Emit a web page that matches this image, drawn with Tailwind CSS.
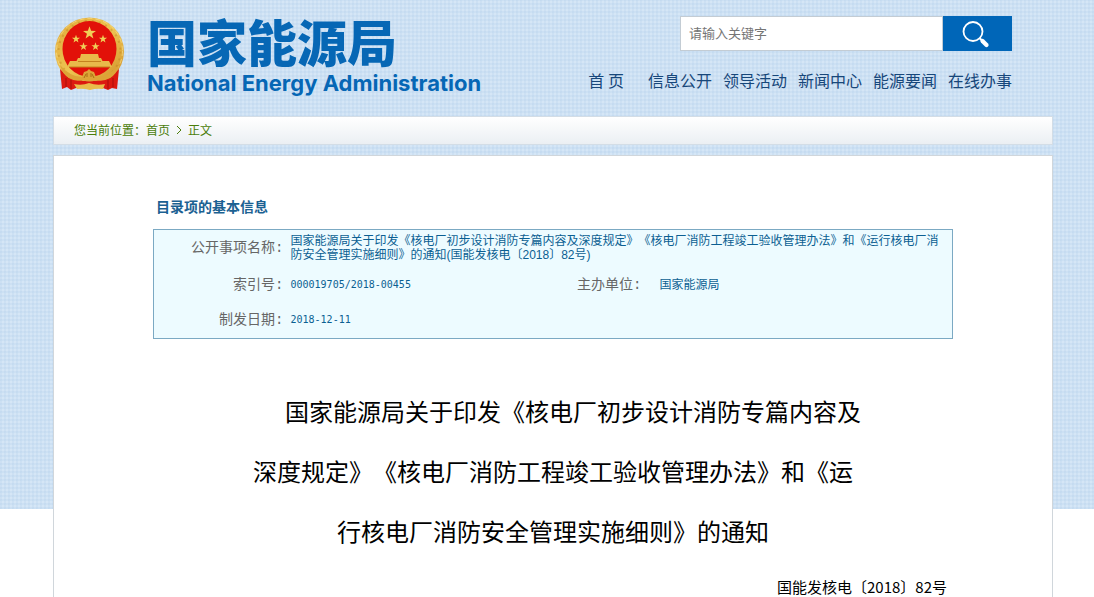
<!DOCTYPE html>
<html lang="zh-CN">
<head>
    <meta charset="UTF-8">
    <meta name="viewport" content="width=device-width, initial-scale=1.0">
    <title>国家能源局</title>
    <script src="https://cdn.jsdelivr.net/npm/@tailwindcss/browser@4"></script>
    <style>
        body {
            font-family: "Liberation Sans", "Noto Sans CJK SC", sans-serif;
            text-spacing-trim: space-all;
        }
        .cjk {
            font-family: "Noto Sans CJK SC", sans-serif;
        }
        .label {
            font-family: "Liberation Mono", "Noto Sans CJK SC", monospace;
        }
        .num {
            font-family: "DejaVu Sans Mono", monospace;
        }
        .latin {
            font-family: Inter, "Liberation Sans", sans-serif;
        }
        .grid-bg {
            background-color: #d5e6f6;
            background-image:
                repeating-linear-gradient(90deg, rgba(165, 198, 230, 0.18) 0 2px, transparent 2px 4px),
                repeating-linear-gradient(0deg, rgba(165, 198, 230, 0.18) 0 2px, transparent 2px 4px);
        }
    </style>
</head>
<body class="bg-white">
    <div class="relative h-screen overflow-hidden">
        <div class="grid-bg absolute inset-x-0 top-0 h-[509px]"></div>

        <div class="relative flex min-h-full flex-col pl-[53px] pr-[41px]">
            <header class="flex h-[116px] shrink-0 items-start justify-between pt-4 pr-[41px]">
                <a href="#" class="flex items-start">
                    <svg class="h-[76px] w-[72px]" viewBox="0 0 72 76" aria-hidden="true">
                        <defs>
                            <path id="star" d="M0-5 1.2-1.6 4.8-1.5 1.9.6 2.9 4 0 2-2.9 4-1.9.6-4.8-1.5-1.2-1.6z" fill="#f0cf57"/>
                            <linearGradient id="gold" x1="0" y1="0" x2="1" y2="1">
                                <stop offset="0" stop-color="#e0a93a"/>
                                <stop offset="0.5" stop-color="#edc452"/>
                                <stop offset="1" stop-color="#cf8e26"/>
                            </linearGradient>
                        </defs>
                        <!-- wreath -->
                        <ellipse cx="36.500" cy="35.500" rx="34.500" ry="34" fill="url(#gold)"/>
                        <ellipse cx="36.500" cy="35.500" rx="31" ry="30.500" fill="none" stroke="#b97c1c" stroke-width="2" stroke-dasharray="2 5" opacity="0.4"/>
                        <ellipse cx="36.500" cy="35" rx="33" ry="32.500" fill="none" stroke="#f8dd85" stroke-width="1" stroke-dasharray="5 3" opacity="0.7"/>
                        <ellipse cx="36.500" cy="33" rx="27" ry="28" fill="#e21109"/>
                        <!-- stars -->
                        <use href="#star" transform="translate(36.500 17) scale(1.350)"/>
                        <use href="#star" transform="translate(23 23) scale(.850)"/>
                        <use href="#star" transform="translate(50 23) scale(.850)"/>
                        <use href="#star" transform="translate(30.500 30.500) scale(.850)"/>
                        <use href="#star" transform="translate(42.500 30.500) scale(.850)"/>
                        <!-- gate -->
                        <path d="M28 38h17l1 4H27zM25 42h23l2 4H23zM24 46h25v-1h7l3 6H14l3-6h7z" fill="#e9b94a"/>
                        <path d="M25 45.500h23M16 51h41" stroke="#c4821f" stroke-width="1"/>
                        <!-- drapery -->
                        <path d="M7 53 9 73l5-2 4 3 5-2h27l5 2 4-2 5 1 2-20-9 9-14 3H30l-14-3z" fill="#dc1a10"/>
                        <path d="M13 62v9M18 64v9M55 64v9M60 62v9" stroke="#a80f0a" stroke-width="1"/>
                        <!-- gear and ribbon -->
                        <path d="M7 49q10 12 22 12l2-5 3-1 2-2 2 2 3 1 2 5q13 0 23-12-2 9-9 13-7 4-14 2-7 3-13 0-8 2-14-2-7-4-9-13z" fill="#dda437"/>
                        <path d="M21 68q8 2 15-1 8 3 16 1l-2 5q-7-1-13 1-7-2-13-1z" fill="#e9bd4b"/>
                        <path d="M31 62l2-4M34 61v-4M38 61v-4M41 62l-2-4" stroke="#a96d14" stroke-width="1"/>
                    </svg>
                    <span class="ml-[22px] flex flex-col text-[#0667b5]">
                        <span class="cjk text-[50px] leading-[48px] font-black">国家能源局</span>
                        <span class="latin mt-[6px] text-[22px] leading-[26px] font-bold">National Energy Administration</span>
                    </span>
                </a>

                <div class="flex flex-col items-end">
                    <form class="flex h-[35px] w-[332px]">
                        <label for="keyword" class="hidden">关键字</label>
                        <input id="keyword" type="text" placeholder="请输入关键字" class="min-w-0 flex-1 border border-[#c3ccd4] bg-white px-2 text-[13px] text-gray-700 placeholder:text-[#757575]">
                        <button type="submit" aria-label="搜索" class="flex w-[69px] items-center justify-center bg-[#0066b8]">
                            <svg class="mr-1 h-7 w-7" viewBox="0 0 28 28" fill="none" stroke="#fff">
                                <circle cx="11" cy="11.500" r="9.500" stroke-width="1.800"/>
                                <path d="M17.500 18 20 20.500" stroke-width="2"/>
                                <path d="M20.500 21 24.500 25" stroke-width="4.200" stroke-linecap="round"/>
                            </svg>
                        </button>
                    </form>
                    <nav class="cjk mt-[17px] flex gap-[11px] text-base text-[#17477a]">
                        <a href="#" class="mr-[13px]">首 页</a>
                        <a href="#">信息公开</a>
                        <a href="#">领导活动</a>
                        <a href="#">新闻中心</a>
                        <a href="#">能源要闻</a>
                        <a href="#">在线办事</a>
                    </nav>
                </div>
            </header>

            <div class="cjk flex h-[29px] shrink-0 items-center border border-[#d3dde6] bg-linear-to-b from-white to-[#ebeff3] px-5 pb-[2px] text-xs text-[#4a7d0a]">
                <span>您当前位置：</span>
                <a href="#">首页</a>
                <svg class="mx-[6px] h-[10px] w-[6px]" viewBox="0 0 6 10" fill="none" stroke="currentColor"><path d="M1 1l4 4-4 4"/></svg>
                <span>正文</span>
            </div>

            <main class="mt-[10px] flex-1 border border-[#d0d6db] bg-white px-[99px] pt-10">
                <h2 class="cjk px-[3px] text-sm leading-5 font-bold text-[#1b6192]">目录项的基本信息</h2>

                <table class="mt-[13px] w-full table-fixed border border-[#7ba9c3] bg-[#edfbff] text-xs leading-[14px] text-[#0b5f92]">
                    <colgroup>
                        <col class="w-[133px]">
                        <col>
                        <col class="w-[80px]">
                        <col class="w-[297px]">
                    </colgroup>
                    <tbody>
                        <tr class="h-[37px]">
                            <th class="label pr-[3px] text-right text-sm font-normal text-[#666]">公开事项名称:</th>
                            <td colspan="3" class="pr-[11px] pl-1 break-all">国家能源局关于印发《核电厂初步设计消防专篇内容及深度规定》《核电厂消防工程竣工验收管理办法》和《运行核电厂消防安全管理实施细则》的通知(国能发核电〔2018〕82号)</td>
                        </tr>
                        <tr class="h-9">
                            <th class="label pr-[3px] text-right text-sm font-normal text-[#666]">索引号:</th>
                            <td class="num pl-1 text-[10px]">000019705/2018-00455</td>
                            <th class="label pr-[14px] text-right text-sm font-normal whitespace-nowrap text-[#666]">主办单位:</th>
                            <td class="pl-1">国家能源局</td>
                        </tr>
                        <tr class="h-9">
                            <th class="label pr-[3px] text-right text-sm font-normal text-[#666]">制发日期:</th>
                            <td class="num pl-1 text-[10px]">2018-12-11</td>
                            <td></td>
                            <td></td>
                        </tr>
                    </tbody>
                </table>

                <h1 class="cjk mt-[42px] text-center text-2xl leading-[60px] text-black">
                    <span class="block pl-10">国家能源局关于印发《核电厂初步设计消防专篇内容及</span>
                    <span class="block">深度规定》《核电厂消防工程竣工验收管理办法》和《运</span>
                    <span class="block">行核电厂消防安全管理实施细则》的通知</span>
                </h1>
                <p class="cjk mt-[14px] pr-[6px] text-right text-[15px] leading-6 text-black">国能发核电〔2018〕82号</p>
            </main>
        </div>
    </div>
</body>
</html>
